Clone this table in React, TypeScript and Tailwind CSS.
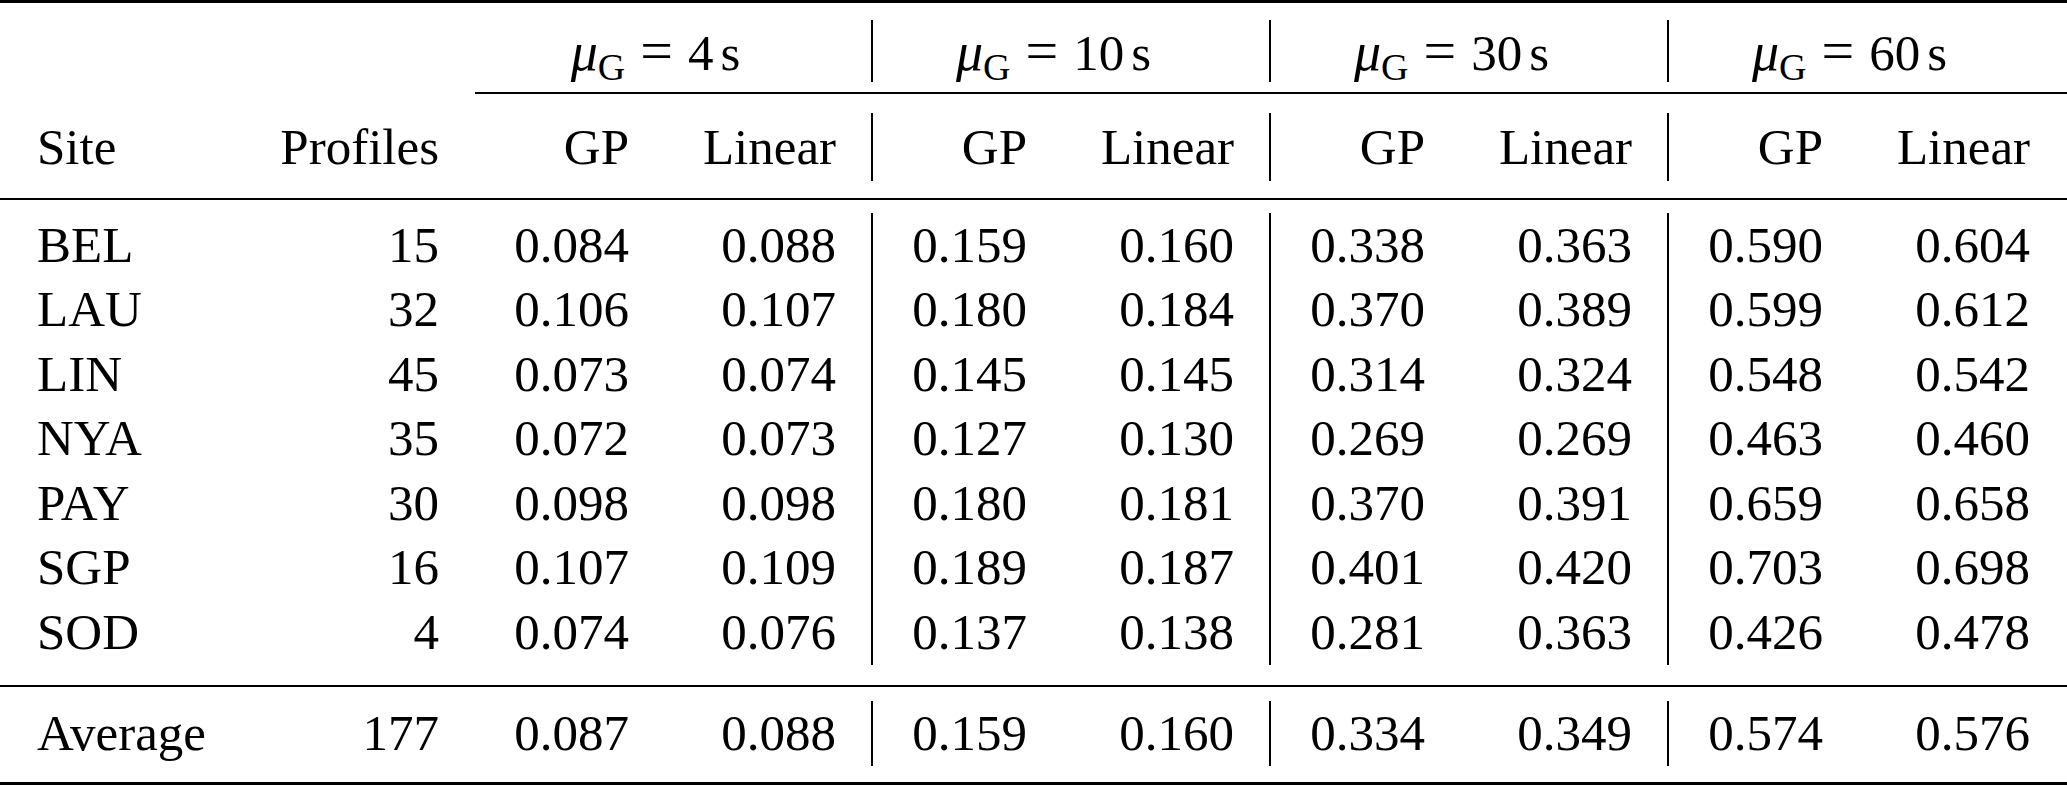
import React from 'react'

type Row = { site: string; profiles: string; vals: string[] }

const rows: Row[] = [
  { site: 'BEL', profiles: '15', vals: ['0.084', '0.088', '0.159', '0.160', '0.338', '0.363', '0.590', '0.604'] },
  { site: 'LAU', profiles: '32', vals: ['0.106', '0.107', '0.180', '0.184', '0.370', '0.389', '0.599', '0.612'] },
  { site: 'LIN', profiles: '45', vals: ['0.073', '0.074', '0.145', '0.145', '0.314', '0.324', '0.548', '0.542'] },
  { site: 'NYA', profiles: '35', vals: ['0.072', '0.073', '0.127', '0.130', '0.269', '0.269', '0.463', '0.460'] },
  { site: 'PAY', profiles: '30', vals: ['0.098', '0.098', '0.180', '0.181', '0.370', '0.391', '0.659', '0.658'] },
  { site: 'SGP', profiles: '16', vals: ['0.107', '0.109', '0.189', '0.187', '0.401', '0.420', '0.703', '0.698'] },
  { site: 'SOD', profiles: '4', vals: ['0.074', '0.076', '0.137', '0.138', '0.281', '0.363', '0.426', '0.478'] },
]

const average: Row = {
  site: 'Average',
  profiles: '177',
  vals: ['0.087', '0.088', '0.159', '0.160', '0.334', '0.349', '0.574', '0.576'],
}

const mus = ['4', '10', '30', '60']

// bar on the right of the first three groups
const groupCls = [
  'flex h-full w-[398px] items-center border-r-2 border-black',
  'flex h-full w-[398px] items-center border-r-2 border-black',
  'flex h-full w-[398px] items-center border-r-2 border-black',
  'flex h-full w-[398px] items-center',
]

function TableRow({ row, height }: { row: Row; height: string }) {
  return (
    <div className={`flex items-center ${height}`}>
      <div className="w-[277px] pl-[37px]">{row.site}</div>
      <div className="w-[162px] text-right">{row.profiles}</div>
      <div className="w-[36px]" />
      {[0, 1, 2, 3].map((g) => (
        <div key={g} className={groupCls[g]}>
          <div className="w-[154px] text-right">{row.vals[g * 2]}</div>
          <div className="w-[207px] text-right">{row.vals[g * 2 + 1]}</div>
        </div>
      ))}
    </div>
  )
}

export default function App() {
  return (
    <div className="w-[2067px] bg-white font-['Liberation_Serif',serif] text-[51px] leading-none text-black">
      {/* toprule */}
      <div className="h-[3px] bg-black" />

      {/* mu header */}
      <div className="h-[89px] pt-[17px]">
        <div className="flex h-[62px] items-center">
          <div className="w-[475px]" />
          {mus.map((m, g) => (
            <div key={m} className={groupCls[g]}>
              <div className="w-[361px] pt-[6px] text-center">
                <span className="text-[54px] italic">μ</span>
                <span className="align-[-10px] text-[38px]">G</span>
                <span className="px-[15px] text-[58px]">=</span>
                <span>{m}</span>
                <span className="pl-[7px]">s</span>
              </div>
            </div>
          ))}
        </div>
      </div>

      {/* cmidrule */}
      <div className="ml-[475px] h-[2px] bg-black" />

      {/* column header */}
      <div className="h-[104px] pt-[19px]">
        <div className="flex h-[68px] items-center">
          <div className="w-[277px] pl-[37px]">Site</div>
          <div className="w-[162px] text-right">Profiles</div>
          <div className="w-[36px]" />
          {[0, 1, 2, 3].map((g) => (
            <div key={g} className={groupCls[g]}>
              <div className="w-[154px] text-right">GP</div>
              <div className="w-[207px] text-right">Linear</div>
            </div>
          ))}
        </div>
      </div>

      {/* midrule */}
      <div className="h-[2px] bg-black" />

      <div className="h-[485px] pt-[13px]">
        {rows.map((r) => (
          <TableRow key={r.site} row={r} height="h-[64.5px]" />
        ))}
      </div>

      <div className="h-[2px] bg-black" />

      <div className="h-[95px] pt-[14px]">
        <TableRow row={average} height="h-[64.5px]" />
      </div>

      {/* bottomrule */}
      <div className="h-[3px] bg-black" />
    </div>
  )
}
